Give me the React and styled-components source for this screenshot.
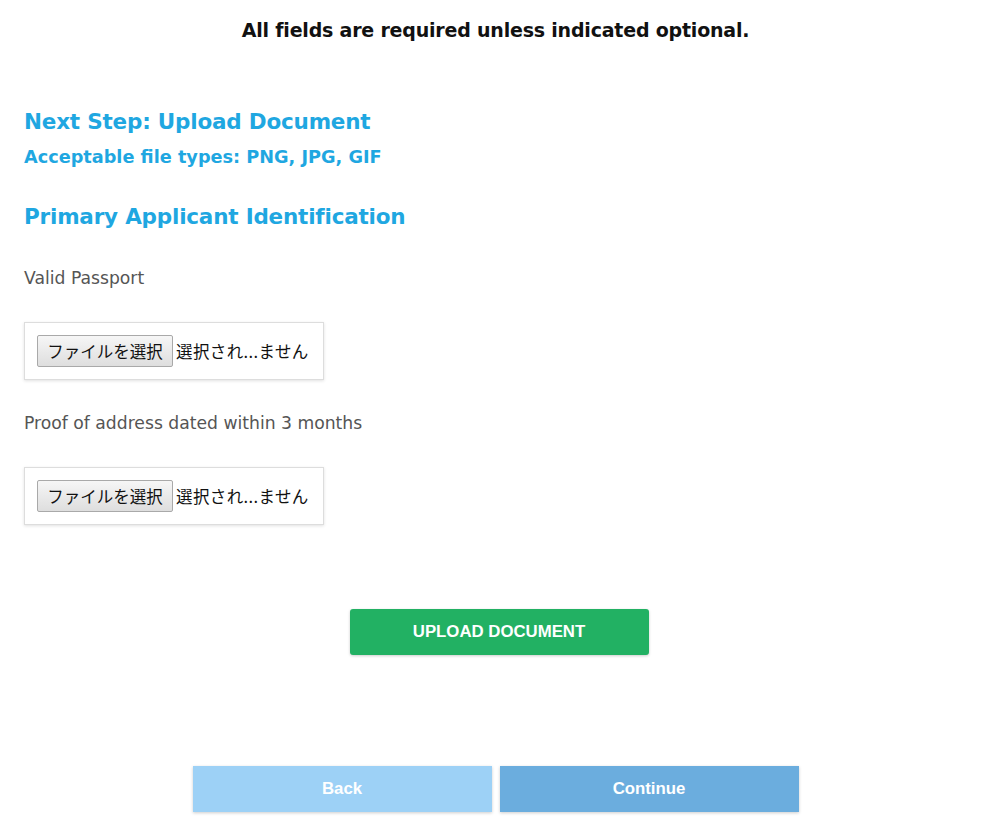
import React from "react";
import styled, { createGlobalStyle } from "styled-components";

const Global = createGlobalStyle`
  html, body { margin: 0; padding: 0; background: #fff; }
  body { font-family: "DejaVu Sans", "Noto Sans CJK JP", sans-serif; }
  * { box-sizing: border-box; }
`;

const Page = styled.div`
  width: 991px;
  min-height: 831px;
  display: flex;
  flex-direction: column;
`;

const Notice = styled.div`
  text-align: center;
  font-size: 19px;
  font-weight: bold;
  color: #111;
  padding-top: 17px;
  line-height: 26px;
  letter-spacing: -0.2px;
`;

const Content = styled.div`
  padding: 0 24px;
  display: flex;
  flex-direction: column;
`;

const Heading = styled.h2`
  margin: ${(p) => p.$mt}px 0 0;
  color: #1fa7e1;
  font-size: 21.5px;
  line-height: 30px;
  font-weight: bold;
  letter-spacing: -0.2px;
`;

const SubHeading = styled.h3`
  margin: 8px 0 0;
  color: #1fa7e1;
  font-size: 17.7px;
  line-height: 24px;
  font-weight: bold;
`;

const Label = styled.div`
  margin-top: ${(p) => p.$mt}px;
  color: #555;
  font-size: 17.2px;
  line-height: 22px;
`;

const FileBox = styled.div`
  margin-top: ${(p) => p.$mt}px;
  width: 300px;
  height: 58px;
  border: 1px solid #ddd;
  box-shadow: 0 1px 3px rgba(0, 0, 0, 0.12);
  display: flex;
  align-items: center;
  padding-left: 12px;
  gap: 3px;
  font-family: "Noto Sans CJK JP", sans-serif;
`;

const FileButton = styled.button`
  width: 136px;
  height: 32px;
  border: 1px solid #a9a9a9;
  border-radius: 2px;
  background: linear-gradient(#f6f6f6, #dedede);
  font-family: "Noto Sans CJK JP", sans-serif;
  font-size: 16.5px;
  color: #111;
  padding: 0;
`;

const FileStatus = styled.span`
  font-size: 16.5px;
  color: #111;
  white-space: nowrap;
  letter-spacing: 0.4px;
`;

const Center = styled.div`
  display: flex;
  justify-content: center;
  gap: 8px;
  margin-top: ${(p) => p.$mt}px;
  padding-left: ${(p) => p.$shift || 0}px;
`;

const ActionButton = styled.button`
  width: 299px;
  height: 46px;
  border: none;
  border-radius: ${(p) => p.$radius || 0}px;
  background: ${(p) => p.$bg};
  color: #fff;
  font-family: "Liberation Sans", Arial, sans-serif;
  font-weight: bold;
  font-size: 16.8px;
  box-shadow: 0 1px 3px rgba(0, 0, 0, 0.2);
  padding: 0;
`;

function FileField({ mt }) {
  return (
    <FileBox $mt={mt}>
      <FileButton type="button">ファイルを選択</FileButton>
      <FileStatus>選択され...ません</FileStatus>
    </FileBox>
  );
}

export default function App() {
  return (
    <Page>
      <Global />
      <Notice>All fields are required unless indicated optional.</Notice>
      <Content>
        <Heading $mt={64}>Next Step: Upload Document</Heading>
        <SubHeading>Acceptable file types: PNG, JPG, GIF</SubHeading>
        <Heading $mt={33}>Primary Applicant Identification</Heading>
        <Label $mt={35}>Valid Passport</Label>
        <FileField mt={33} />
        <Label $mt={32}>Proof of address dated within 3 months</Label>
        <FileField mt={33} />
      </Content>
      <Center $mt={84} $shift={7}>
        <ActionButton $bg="#22b163" $radius={3}>UPLOAD DOCUMENT</ActionButton>
      </Center>
      <Center $mt={111}>
        <ActionButton $bg="#9dd1f6">Back</ActionButton>
        <ActionButton $bg="#6badde">Continue</ActionButton>
      </Center>
    </Page>
  );
}
